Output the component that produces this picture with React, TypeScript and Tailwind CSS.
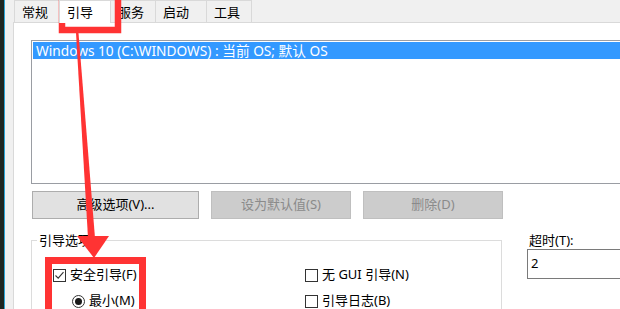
import React from 'react';

const font = { fontFamily: '"Noto Sans", "Noto Sans CJK SC", sans-serif' };

function Tab({ label, width, active }: { label: string; width: string; active?: boolean }) {
    return (
        <div
            className={`flex border-l border-t border-[#d9d9d9] pl-[7px] text-[13px] text-black ${width} ${
                active ? 'relative z-10 -mb-px h-[23px] items-start bg-white pt-[2px]' : 'h-[22px] items-center bg-[#f0f0f0] pt-[2px]'
            }`}
        >
            {label}
        </div>
    );
}

function CheckBox({ checked }: { checked?: boolean }) {
    return (
        <span className="flex h-[13px] w-[13px] shrink-0 items-center justify-center border border-[#333] bg-white">
            {checked && (
                <svg width="11" height="11" viewBox="0 0 11 11">
                    <path d="M1.5 5.5 L4.2 8.2 L9.5 2.2" fill="none" stroke="#333" strokeWidth="1.1" />
                </svg>
            )}
        </span>
    );
}

function Radio() {
    return (
        <span className="flex h-[13px] w-[13px] shrink-0 items-center justify-center rounded-full border border-[#333] bg-white">
            <span className="h-[7px] w-[7px] rounded-full bg-[#1a1a1a]" />
        </span>
    );
}

export default function App() {
    return (
        <div className="relative flex h-[309px] w-[620px] overflow-hidden bg-[#f0f0f0]" style={font}>
            {/* desktop edge behind the dialog */}
            <div className="w-[4px] shrink-0 bg-[#1d2621]" />
            <div className="w-[1px] shrink-0 bg-[#2aa6d8]" />
            <div className="w-[8px] shrink-0 bg-[#f0f0f0]" />

            <div className="flex min-w-0 flex-1 flex-col">
                <div className="flex h-[22px] shrink-0 items-end pl-px">
                    <Tab label="常规" width="w-[45px]" />
                    <Tab label="引导" width="w-[51px]" active />
                    <Tab label="服务" width="w-[45px]" />
                    <Tab label="启动" width="w-[51px]" />
                    <div className="border-r border-[#d9d9d9]">
                        <Tab label="工具" width="w-[45px]" />
                    </div>
                </div>

                <div className="flex flex-1 flex-col border-l border-t border-[#d9d9d9] bg-white pl-[17px] pt-[17px]">
                    <div className="h-[144px] w-[620px] shrink-0 border border-[#9a9da3] bg-white p-px">
                        <div className="flex h-[17px] items-center bg-[#3399ff] pl-[3px] text-[13.7px] leading-none text-white">
                            Windows 10 (C:\WINDOWS) : 当前 OS; 默认 OS
                        </div>
                    </div>

                    <div className="mt-[7px] flex gap-[12px] pl-px text-[13px]">
                        <button className="h-[28px] w-[167px] border border-[#adadad] bg-[#e1e1e1] text-black">高级选项(V)...</button>
                        <button className="h-[28px] w-[140px] border border-[#bfbfbf] bg-[#cccccc] text-[#8a8a8a]">设为默认值(S)</button>
                        <button className="h-[28px] w-[140px] border border-[#bfbfbf] bg-[#cccccc] text-[#8a8a8a]">删除(D)</button>
                    </div>

                    <div className="mt-[14px] flex text-[13px] text-black">
                        <div className="relative mt-[7px] h-[90px] w-[471px] shrink-0 border border-[#dcdcdc] pl-[21px] pt-[25px]">
                            <span className="absolute -top-[9px] left-[5px] bg-white px-[2px] leading-[17px]">引导选项</span>
                            <div className="grid grid-cols-[252px_1fr] gap-y-[8px]">
                                <div className="flex h-[18px] items-center gap-[4px]">
                                    <CheckBox checked />
                                    <span>安全引导(F)</span>
                                </div>
                                <div className="flex h-[18px] items-center gap-[4px]">
                                    <CheckBox />
                                    <span>无 GUI 引导(N)</span>
                                </div>
                                <div className="flex h-[18px] items-center gap-[4px] pl-[19px]">
                                    <Radio />
                                    <span>最小(M)</span>
                                </div>
                                <div className="flex h-[18px] items-center gap-[4px]">
                                    <CheckBox />
                                    <span>引导日志(B)</span>
                                </div>
                            </div>
                        </div>

                        <div className="ml-[25px] flex flex-col">
                            <span className="pl-[2px] leading-[15px]">超时(T):</span>
                            <div className="mt-px flex h-[30px] w-[120px] items-center border border-[#7a7a7a] bg-white pl-[3px]">2</div>
                        </div>
                    </div>
                </div>
            </div>

            {/* annotation overlay */}
            <svg className="pointer-events-none absolute inset-0" width="620" height="309" viewBox="0 0 620 309">
                <rect x="62" y="-5" width="56" height="35" fill="none" stroke="#f33" strokeWidth="6.5" />
                <polygon points="76,33 78.5,33 95,238 88,238" fill="#f33" />
                <polygon points="77,236 109,236 94,258" fill="#f33" />
                <rect x="48.5" y="260.5" width="94" height="60" fill="none" stroke="#f33" strokeWidth="7" />
            </svg>
        </div>
    );
}
